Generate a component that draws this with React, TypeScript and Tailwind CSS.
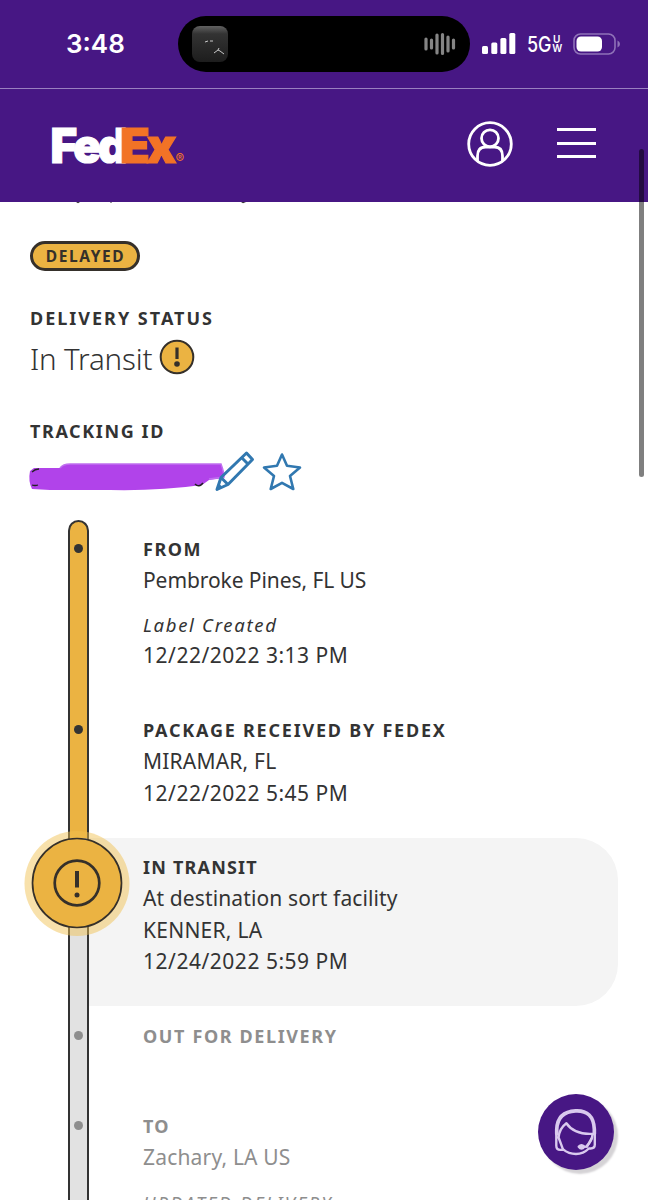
import type { ReactNode } from "react";

const heading = "whitespace-nowrap text-[18px] leading-[31px] font-bold";
const body = "whitespace-nowrap text-[21px] leading-[31.5px]";
const date = "whitespace-nowrap text-[21px] leading-[31.5px] tracking-[0.52px]";

function StatusBar() {
  return (
    <div className="flex h-[88px] shrink-0 items-center pr-[27px] pl-[66px] text-white">
      <div className="w-[112px] shrink-0 font-['Inter',sans-serif] text-[26px] leading-8 font-semibold">3:48</div>
      <div className="flex h-[56px] w-[292px] shrink-0 items-center justify-between rounded-full bg-black pr-[14px] pl-[14px]">
        <svg width="36" height="36" viewBox="0 0 36 36">
          <defs>
            <linearGradient id="art" x1="0" y1="0" x2="0" y2="1">
              <stop offset="0" stopColor="#626262" />
              <stop offset=".22" stopColor="#333" />
              <stop offset="1" stopColor="#1d1d1d" />
            </linearGradient>
          </defs>
          <rect width="36" height="36" rx="8" fill="url(#art)" />
          <path d="M13 16l3-1M18 15h3M22 27l4-3 2 1 4 3M26 24l1-2" stroke="#c9c9c9" strokeWidth="1" fill="none" />
        </svg>
        <svg width="32" height="24" viewBox="0 0 32 24" stroke="#858585" strokeWidth="3.2" strokeLinecap="round">
          <path d="M2 7v10M7.5 8v8M13 3v18M18.500 2.500v19M24 5v14M29.500 8v8" />
        </svg>
      </div>
      <svg className="ml-[12px] shrink-0" width="34" height="22" viewBox="0 0 34 22" fill="#fff">
        <rect x="0" y="13" width="6" height="8" rx="1.5" />
        <rect x="9.300" y="9.500" width="6" height="11.500" rx="1.500" />
        <rect x="18.400" y="5" width="6" height="16" rx="1.500" />
        <rect x="27.300" y="0" width="6" height="21" rx="1.500" />
      </svg>
      <svg className="ml-[11px] shrink-0 overflow-visible" width="37" height="22" viewBox="0 0 37 22" fill="#fff" fontFamily="Inter, sans-serif">
        <text x="0" y="19" fontSize="22" fontWeight="500" textLength="24.500" lengthAdjust="spacingAndGlyphs">5G</text>
        <text x="26" y="9.500" fontSize="10" fontWeight="600">U</text>
        <text x="25.300" y="19.300" fontSize="10" fontWeight="600" textLength="10" lengthAdjust="spacingAndGlyphs">W</text>
      </svg>
      <svg className="ml-[9px] shrink-0" width="48" height="22" viewBox="0 0 48 22">
        <rect x="1" y="1" width="41" height="20" rx="6.500" fill="none" stroke="#8f72b8" strokeWidth="1.600" />
        <rect x="3.500" y="3.500" width="25.500" height="15" rx="4.500" fill="#fff" />
        <path d="M44.500 7.500q2.500 1 2.500 3.500t-2.500 3.500z" fill="#8f72b8" />
      </svg>
    </div>
  );
}

function Header() {
  return (
    <header className="flex h-[114px] shrink-0 items-start border-t border-[#9a80c0] pt-[32px] pr-[52px] pl-[52px]">
      <svg className="overflow-visible" width="136" height="48" viewBox="0 0 136 48" fontFamily="Inter, sans-serif" fontWeight="900">
        <text x="-1.500" y="41.500" fontSize="47.500" fill="#fff" stroke="#fff" strokeWidth="1.200" textLength="74" lengthAdjust="spacingAndGlyphs" letterSpacing="-3">Fed</text>
        <text x="68" y="41.500" fontSize="47.500" fill="#f27326" stroke="#f27326" strokeWidth="1.200" textLength="53.500" lengthAdjust="spacingAndGlyphs" letterSpacing="-3">Ex</text>
        <text x="123.500" y="41.500" fontSize="13" fontWeight="500" fill="#f27326">®</text>
      </svg>
      <svg className="ml-auto" width="46" height="46" viewBox="0 0 46 46" fill="none" stroke="#fff" strokeWidth="2.800">
        <circle cx="23" cy="23" r="21.300" />
        <circle cx="23" cy="17.300" r="8.500" />
        <path d="M10.500 40v-5q0-9 8-9h9q8 0 8 9v5" />
      </svg>
      <div className="mt-[7px] ml-[44px] flex w-[39px] flex-col gap-[10.500px]">
        <div className="h-[3px] bg-white" />
        <div className="h-[3px] bg-white" />
        <div className="h-[3px] bg-white" />
      </div>
    </header>
  );
}

function Alert({ className }: { className: string }) {
  return (
    <svg className={className} width="36" height="36" viewBox="0 0 36 36">
      <circle cx="18" cy="18" r="16.300" fill="#ebb342" stroke="#35302a" strokeWidth="2" />
      <path d="M18 8.500v11.500" stroke="#35302a" strokeWidth="3.200" />
      <circle cx="18" cy="25" r="2.800" fill="#35302a" />
    </svg>
  );
}

function Step({ className, rail, dot, children }: { className: string; rail: string; dot: ReactNode; children: ReactNode }) {
  return (
    <div className={`flex shrink-0 ${className}`}>
      <div className={`relative flex w-[21px] shrink-0 flex-col items-center border-x-2 border-[#333] ${rail}`}>{dot}</div>
      {children}
    </div>
  );
}

function Dot({ className }: { className: string }) {
  return <div className={`size-[9px] shrink-0 rounded-full ${className}`} />;
}

export default function App() {
  return (
    <div className="relative flex h-[1200px] w-[648px] flex-col overflow-hidden bg-white font-['Noto_Sans',sans-serif] text-[#333]">
      <div className="flex shrink-0 flex-col bg-[#471784]">
        <StatusBar />
        <Header />
      </div>
      <svg className="shrink-0" width="648" height="2" viewBox="0 0 648 2">
        <path d="M76 0h4l-2 1.200zM110 0h2l-1 1zM241 0h5l-3 1.200z" fill="#333" />
      </svg>

      <div className="flex shrink-0 flex-col items-start pl-[30px]">
        <div className="mt-[37px] flex h-[30px] w-[110px] items-center justify-center rounded-full border-[3px] border-[#35302a] bg-[#ebb342] pl-px text-[15.500px] leading-5 font-bold tracking-[1.600px] text-[#35302a]">
          DELAYED
        </div>
        <h2 className={`mt-[32px] tracking-[2px] ${heading}`}>DELIVERY STATUS</h2>
        <div className="flex h-[50px] items-center">
          <div className="w-[129px] text-[29.500px] leading-[44px] font-light tracking-[-0.150px] whitespace-nowrap">In Transit</div>
          <Alert className="-mt-[5px]" />
        </div>
        <h2 className={`mt-[32px] tracking-[1.600px] ${heading}`}>TRACKING ID</h2>
        <div className="mt-[5px] flex h-[42px] items-start">
          <svg width="196" height="42" viewBox="0 0 196 42" className="overflow-visible">
            <path d="M0 19q-2 10 2 18l18 1 60 0q50 1 92-5l7-5 15-2q0-5-3-14H40q-7 0-10 4L4 16Z" fill="#b143ea" />
            <path d="M30 16q3-4 10-4h151q3 8 3 13l-15 2" fill="none" stroke="#c070f0" strokeWidth="1.500" />
            <path d="M2 20q3-3 7-3M2 33q3 1 6 0" fill="none" stroke="#222" strokeWidth="1.300" />
            <path d="M165 32q4 4 8-1" fill="none" stroke="#222" strokeWidth="1.600" />
          </svg>
          <svg className="-ml-[11px] overflow-visible" width="40" height="41" viewBox="0 0 40 41" fill="none" stroke="#3178b0" strokeWidth="3" strokeLinejoin="round">
            <path d="M2 37.500L6 25.500L31.500 1L37.500 7.500L13 32.500ZM6 25.500L13 32.500M27 6L33 12M2 37.500L6 33.500" />
          </svg>
          <svg className="ml-[7px] overflow-visible" width="40" height="41" viewBox="0 0 40 41" fill="none" stroke="#3178b0" strokeWidth="2.600" strokeLinejoin="round">
            <path d="M20 2.500L25 13.800L38 15.500L28 24L31.300 37L20 30.800L8.700 37L12 24L2 15.500L15 13.800Z" />
          </svg>
        </div>
      </div>

      <div className="mt-[26px] flex flex-col pl-[68px]">
        <Step
          className="h-[181px]"
          rail="rounded-t-full border-t-2 bg-[#ebb342] pt-[22px]"
          dot={<Dot className="bg-[#333]" />}
        >
          <div className="flex flex-col pt-[14px] pl-[54px]">
            <h3 className={`tracking-[1.500px] ${heading}`}>FROM</h3>
            <p className={`tracking-[-0.080px] ${body}`}>Pembroke Pines, FL US</p>
            <p className="mt-[12.500px] text-[18.500px] leading-[31px] tracking-[1.700px] italic">Label Created</p>
            <p className={date}>12/22/2022 3:13 PM</p>
          </div>
        </Step>
        <Step className="h-[137px]" rail="bg-[#ebb342] pt-[24px]" dot={<Dot className="bg-[#333]" />}>
          <div className="flex flex-col pt-[14px] pl-[54px]">
            <h3 className={`tracking-[1.780px] ${heading}`}>PACKAGE RECEIVED BY FEDEX</h3>
            <p className={`tracking-[0.200px] ${body}`}>MIRAMAR, FL</p>
            <p className={date}>12/22/2022 5:45 PM</p>
          </div>
        </Step>
        <Step
          className="h-[168px]"
          rail="z-10 bg-[#e2e2e2]"
          dot={
            <svg className="absolute -top-[7px] -left-[46px]" width="106" height="106" viewBox="0 0 106 106">
              <circle cx="53" cy="52.500" r="52.500" fill="#f0c050" fillOpacity=".48" />
              <circle cx="53" cy="52" r="44.500" fill="#ebb342" stroke="#35302a" strokeWidth="1.700" />
              <circle cx="53" cy="52" r="22.300" fill="none" stroke="#35302a" strokeWidth="2.700" />
              <path d="M53 40v16.500" stroke="#35302a" strokeWidth="4" />
              <circle cx="53" cy="64" r="2.500" fill="#35302a" />
            </svg>
          }
        >
          <div className="flex w-[529px] flex-col rounded-r-[42px] bg-[#f4f4f4] pt-[14px] pl-[54px]">
            <h3 className={`tracking-[1.200px] ${heading}`}>IN TRANSIT</h3>
            <p className={`tracking-[0.120px] ${body}`}>At destination sort facility</p>
            <p className={`tracking-[0.250px] ${body}`}>KENNER, LA</p>
            <p className={date}>12/24/2022 5:59 PM</p>
          </div>
        </Step>
        <Step className="h-[91px]" rail="bg-[#e2e2e2] pt-[25px]" dot={<Dot className="bg-[#8e8e8e]" />}>
          <div className="pt-[15px] pl-[54px] text-[#8e8e8e]">
            <h3 className={`tracking-[1.620px] ${heading}`}>OUT FOR DELIVERY</h3>
          </div>
        </Step>
        <Step className="h-[140px]" rail="bg-[#e2e2e2] pt-[24px]" dot={<Dot className="bg-[#8e8e8e]" />}>
          <div className="pt-[14px] pl-[54px] text-[#8e8e8e]">
            <h3 className={`tracking-[1.300px] ${heading}`}>TO</h3>
            <p className={`tracking-[0.180px] ${body}`}>Zachary, LA US</p>
            <p className="mt-[13px] text-[18.500px] leading-[31px] tracking-[2.050px] italic">UPDATED DELIVERY</p>
          </div>
        </Step>
      </div>

      <div className="absolute top-[149px] right-[4px] h-[328px] w-[5px] rounded-full bg-black/50" />
      <button className="absolute top-[1094px] left-[538px] flex size-[76px] items-center justify-center rounded-full bg-[#471784] shadow-[4px_4px_2px_#d5d3d6]">
        <svg width="44" height="50" viewBox="0 0 48 52" fill="none" stroke="#d9c9ee" strokeWidth="2.600" strokeLinecap="round" strokeLinejoin="round">
          <path d="M3 28V23Q4 4 23.500 3T44 23V28" strokeWidth="4" />
          <path d="M2.500 27V41Q2.500 45.500 7 45.500H10L5 32Q6 22 13.500 16.500Q22 29 42 28Q42 36 35 42L29 43" />
          <path d="M10 45Q16 50 24 50T38 44H40Q44.500 44 44.500 40V27M41 33L36 42" />
          <path d="M27 42Q30 39 33 42Q30 46 27 42Z" fill="#d9c9ee" />
        </svg>
      </button>
    </div>
  );
}
